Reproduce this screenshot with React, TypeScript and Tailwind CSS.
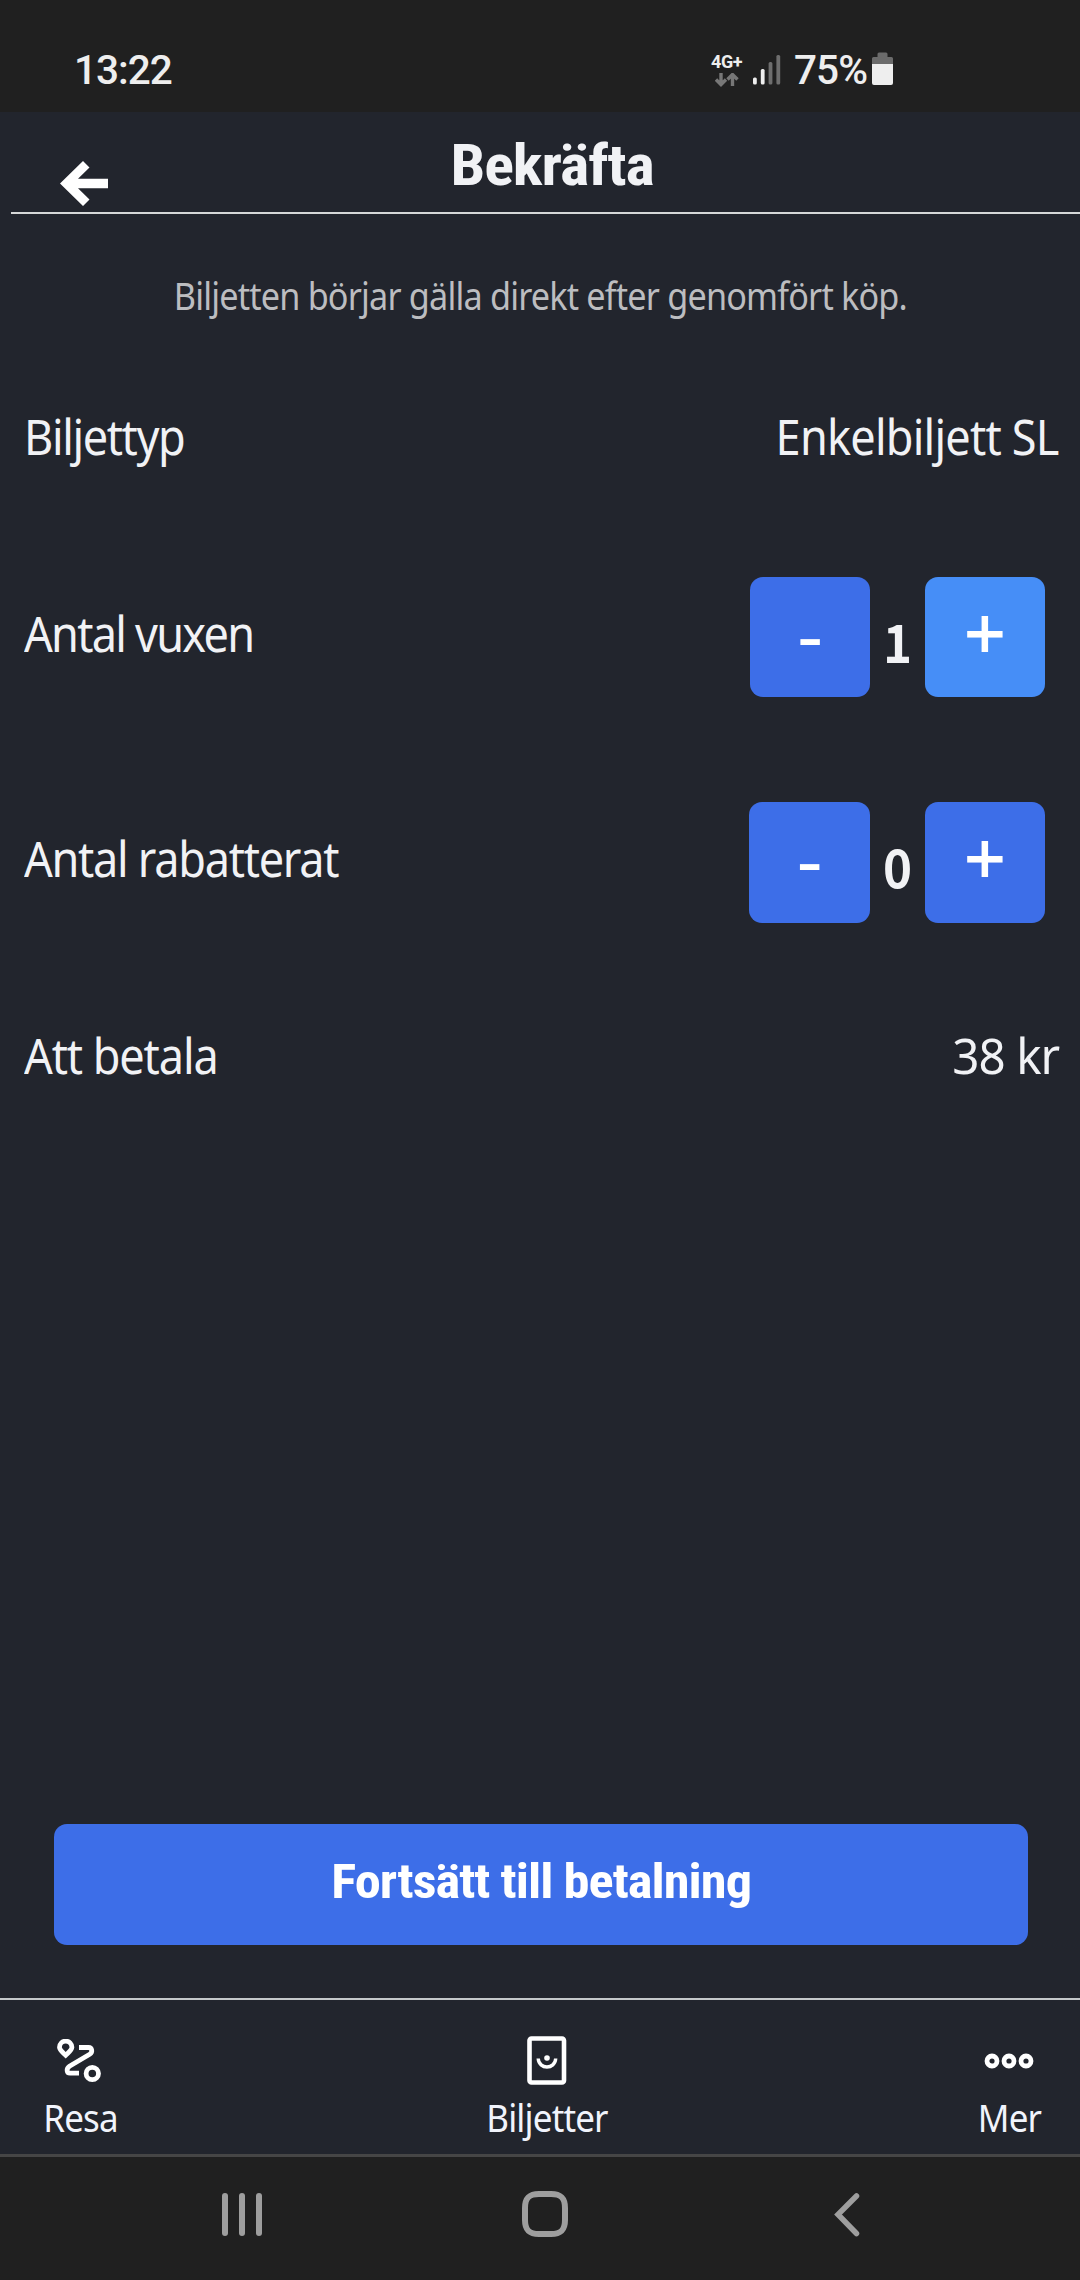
type StepperProps = {
  label: string;
  labelClass: string;
  value: number;
  rowClass: string;
  minusClass: string;
  plusClass: string;
};

type InfoProps = {
  label: string;
  labelClass: string;
  value: string;
  valueClass: string;
  rowClass: string;
};

function StatusBar() {
  return (
    <div className="flex h-[112px] w-full shrink-0 bg-[#202020] pt-[46px] text-[#eeeeee]">
      <span className="ml-[74px] w-[637px] text-[40.5px] leading-[48px] font-medium tracking-[-1px]">13:22</span>
      <div className="flex w-[42px] flex-col items-start pt-[6px]">
        <span className="text-[18px] leading-[20px] font-bold tracking-[-0.4px]">4G+</span>
        <svg width="24" height="14" viewBox="0 0 24 14" className="ml-[4px] mt-px" fill="none" stroke="#777" strokeWidth="3.4">
          <path d="M6 0v11M1 6.500l5 5 5-5M17.500 13V2M12.500 6.500l5-5 5 5" />
        </svg>
      </div>
      <svg width="28" height="30" viewBox="0 0 28 30" className="mt-[9px]">
        <rect x="0" y="22.500" width="3.800" height="7" rx="1.500" fill="#eee" />
        <rect x="7.800" y="14" width="3.800" height="15.500" rx="1.500" fill="#eee" />
        <rect x="15.600" y="7" width="3.800" height="22.500" rx="1.500" fill="#6e6e6e" />
        <rect x="23.400" y="0" width="3.800" height="29.500" rx="1.500" fill="#6e6e6e" />
      </svg>
      <span className="ml-[13px] w-[78px] text-[40.5px] leading-[48px] font-medium whitespace-nowrap tracking-[-0.9px]">75%</span>
      <svg width="21" height="33" viewBox="0 0 21 33" className="mt-[6px]">
        <path d="M5.500 5V2q0-1.500 1.500-1.500h7q1.500 0 1.500 1.500v3h4q1.500 0 1.500 1.500V13H0V6.500Q0 5 1.500 5z" fill="#6b6b6b" />
        <path d="M0 12h21v19q0 2-2 2H2q-2 0-2-2z" fill="#eee" />
      </svg>
    </div>
  );
}

function Header() {
  return (
    <header className="ml-[11px] flex h-[102px] shrink-0 border-b-2 border-[#d6d8d8]">
      <svg width="48" height="46" viewBox="0 0 48 46" className="mt-[49px] ml-[49px] shrink-0" fill="#fff">
        <polygon points="0,22.500 23,0 29.500,6.500 18,17.700 48,17.700 48,27.300 18,27.300 29.500,38.500 23,45" />
      </svg>
      <h1 className="flex flex-1 justify-center pt-[18px] pr-[84px] font-['Roboto'] text-[57.5px] leading-[72px] font-bold [font-stretch:75%]">
        <span className="scale-x-[1.08] tracking-[-1px]">Bekräfta</span>
      </h1>
    </header>
  );
}

function InfoRow({ label, labelClass, value, valueClass, rowClass }: InfoProps) {
  return (
    <div className={`flex shrink-0 items-center justify-between pr-[21px] pb-1 pl-6 text-[49px] leading-[56px] ${rowClass}`}>
      <span className={`origin-left scale-x-[0.92] ${labelClass}`}>{label}</span>
      <span className={`origin-right ${valueClass}`}>{value}</span>
    </div>
  );
}

function StepperRow({ label, labelClass, value, rowClass, minusClass, plusClass }: StepperProps) {
  return (
    <div className={`flex shrink-0 items-center justify-between pr-[35px] pl-6 text-[49px] leading-[56px] ${rowClass}`}>
      <span className={`origin-left scale-x-[0.92] pb-1 ${labelClass}`}>{label}</span>
      <div className="flex pt-1">
        <button className={`flex items-center justify-center rounded-[13px] bg-[#3d6ee8] pb-[9px] font-['Open_Sans'] text-[80px] leading-[80px] text-white ${minusClass}`}>-</button>
        <span className="w-[55px] scale-x-[0.93] pt-[35px] text-center font-['Noto_Sans_CJK_SC'] text-[53px] leading-[56px] font-bold">{value}</span>
        <button className={`flex w-[120px] items-center justify-center rounded-[13px] pb-[10px] font-['Open_Sans'] text-[74px] leading-[76px] font-semibold text-white ${plusClass}`}>+</button>
      </div>
    </div>
  );
}

function RouteIcon() {
  return (
    <svg width="44" height="44" viewBox="0 0 44 44" fill="none" stroke="#fff" strokeWidth="4.800">
      <path d="M8.700 16.300C5 12.800 2.500 11 2.500 8.300a6.200 6.200 0 0 1 12.400 0c0 2.700-2.500 4.500-6.200 8z" />
      <path d="M22 8.500h9.500c3.800 0 4.300 4.800 1.200 6.700L12.500 27.300c-3.600 2.500-2.800 6.900.5 6.900h9" />
      <circle cx="35.300" cy="34.500" r="6.200" />
    </svg>
  );
}

function TicketIcon() {
  return (
    <svg width="40" height="49" viewBox="0 0 40 49" fill="none" stroke="#fff">
      <rect x="2.500" y="2.500" width="34.500" height="44" rx="2" strokeWidth="4.600" />
      <path d="M11.200 22.500c.6 11.300 16.900 11.300 17.500 0" strokeWidth="3.400" />
      <circle cx="20" cy="22" r="2.800" fill="#fff" stroke="none" />
    </svg>
  );
}

function MoreIcon() {
  return (
    <svg width="50" height="16" viewBox="0 0 50 16" fill="none" stroke="#fff" strokeWidth="4.800">
      <circle cx="8" cy="8" r="5" />
      <circle cx="25" cy="8" r="5" />
      <circle cx="42" cy="8" r="5" />
    </svg>
  );
}

function TabBar() {
  const tab = "flex flex-col items-center text-[38px] leading-[44px] tracking-[-0.9px] text-[#f1f4fc]";
  return (
    <nav className="flex h-[156px] shrink-0 border-t-2 border-[#c5c8ca] pt-[35px]">
      <div className={`${tab} w-[160px]`}>
        <div className="flex h-[50px] items-center pt-[2px] pr-[2px]"><RouteIcon /></div>
        <span className="mt-[10px] scale-x-[0.92]">Resa</span>
      </div>
      <div className={`${tab} flex-1 pr-[4px]`}>
        <div className="flex h-[50px] items-center"><TicketIcon /></div>
        <span className="mt-[10px] scale-x-[0.92]">Biljetter</span>
      </div>
      <div className={`${tab} w-[142px]`}>
        <div className="flex h-[50px] items-center pt-[2px]"><MoreIcon /></div>
        <span className="mt-[10px] scale-x-[0.92]">Mer</span>
      </div>
    </nav>
  );
}

function SystemNav() {
  return (
    <div className="flex h-[126px] shrink-0 border-t-[3px] border-[#464646] bg-[#202020] pt-[34px]">
      <div className="mt-[2px] ml-[222px] flex h-[43px] gap-[11px]">
        <div className="w-[6px] rounded-full bg-[#9e9e9e]" />
        <div className="w-[6px] rounded-full bg-[#9e9e9e]" />
        <div className="w-[6px] rounded-full bg-[#9e9e9e]" />
      </div>
      <svg width="46" height="46" viewBox="0 0 46 46" className="ml-[259.5px]" fill="none" stroke="#9e9e9e" strokeWidth="6">
        <path d="M17 3h12c10 0 14 4 14 14v12c0 10-4 14-14 14H17C7 43 3 39 3 29V17C3 7 7 3 17 3z" />
      </svg>
      <svg width="26" height="44" viewBox="0 0 26 44" className="mt-[2px] ml-[266px]" fill="none" stroke="#9e9e9e" strokeWidth="5.500" strokeLinecap="round">
        <path d="M22.500 3L4 21.500l18.500 19" />
      </svg>
    </div>
  );
}

export default function App() {
  return (
    <div className="flex h-[2280px] w-[1080px] flex-col overflow-hidden bg-[#22252d] font-['Noto_Sans',sans-serif] text-[#f1f2f5]">
      <div className="font-['Roboto']"><StatusBar /></div>
      <Header />
      <p className="flex h-[166px] shrink-0 items-center justify-center pb-[4px] text-[38px] leading-[44px] tracking-[-0.9px] text-[#bcbdc0]">
        <span className="scale-x-[0.9]">Biljetten börjar gälla direkt efter genomfört köp.</span>
      </p>
      <InfoRow label="Biljettyp" labelClass="tracking-[-1.5px]" value="Enkelbiljett SL" valueClass="scale-x-[0.92] tracking-[-0.85px]" rowClass="h-[116px]" />
      <StepperRow label="Antal vuxen" labelClass="tracking-[-1.9px]" value={1} rowClass="h-[278px]" minusClass="h-[120px] w-[120px]" plusClass="h-[120px] bg-[#468ef7]" />
      <StepperRow label="Antal rabatterat" labelClass="tracking-[-1.4px]" value={0} rowClass="h-[172px]" minusClass="h-[121px] w-[121px]" plusClass="h-[121px] bg-[#3d6ee8]" />
      <InfoRow label="Att betala" labelClass="tracking-[-1.2px]" value="38 kr" valueClass="scale-x-[0.97] tracking-[-1px]" rowClass="h-[222px]" />
      <button className="mt-auto mb-[53px] ml-[54px] h-[121px] w-[974px] shrink-0 rounded-[13px] bg-[#3d6ee8] pb-[5px] font-['Roboto'] text-[49px] leading-[56px] font-bold text-white [font-stretch:75%]">
        <span className="inline-block scale-x-[1.07] tracking-[-0.9px]">Fortsätt till betalning</span>
      </button>
      <TabBar />
      <SystemNav />
    </div>
  );
}
